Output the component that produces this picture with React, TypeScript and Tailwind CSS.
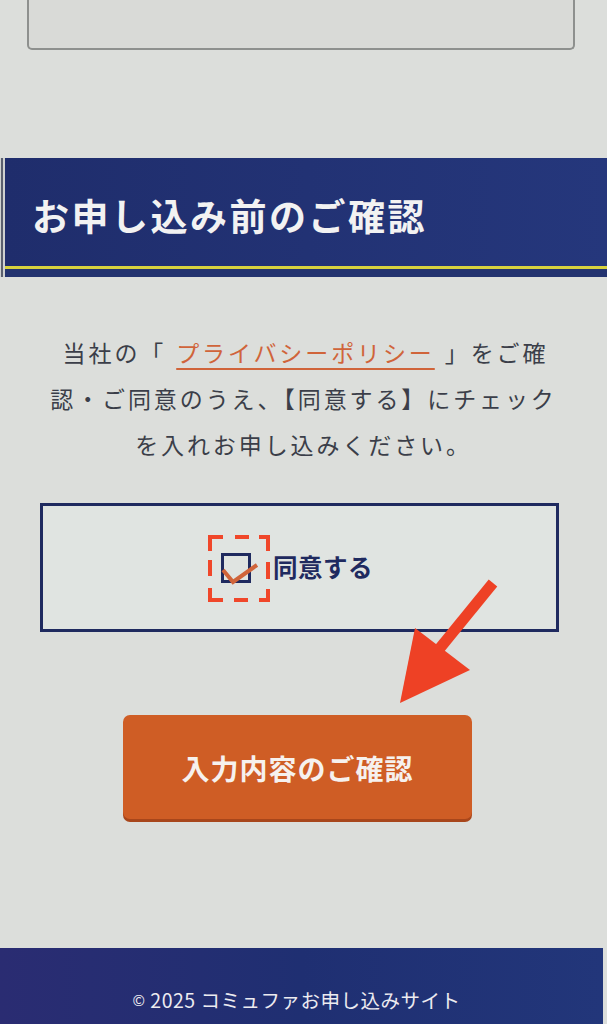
import React from "react";

export default function App() {
  return (
    <div
      className="relative min-h-[1024px] overflow-hidden bg-[#dcdedb]"
      style={{ fontFamily: '"Noto Sans CJK JP", "Noto Sans", sans-serif' }}
    >
      {/* top textarea remnant */}
      <div className="ml-[27px] mr-[32px] h-[50px] rounded-b-[5px] border-x-2 border-b-2 border-[#8e908e] bg-[#d9dad7]" />

      {/* section header */}
      <div className="mt-[108px] flex">
        <div className="flex w-[5px] bg-[#cfd1d0]">
          <div className="ml-[1px] w-[2px] bg-[#5a5f6e]" />
        </div>
        <div className="flex-1">
          <div className="flex h-[108px] items-center bg-gradient-to-r from-[#1f2d6c] to-[#25377c] pl-[27px] pt-[8px]">
            <h2 className="text-[37px] font-bold tracking-[2.5px] text-[#f2f2f2]">
              お申し込み前のご確認
            </h2>
          </div>
          <div className="h-[3px] bg-[#d8d23e]" />
          <div className="h-[8px] bg-[#23336f]" />
        </div>
      </div>

      {/* paragraph */}
      <div className="mt-[52px] flex flex-col items-center text-[23px] leading-[46px] tracking-[2.9px] text-[#3b3e49]">
        <p className="whitespace-nowrap pl-[4px]">
          当社の「
          <span className="mx-[10px] text-[#d0643a] underline decoration-[2px] underline-offset-[6px]">
            プライバシーポリシー
          </span>
          」をご確
        </p>
        <p className="whitespace-nowrap">認・ご同意のうえ、【同意する】にチェック</p>
        <p className="whitespace-nowrap">を入れお申し込みください。</p>
      </div>

      {/* agree box */}
      <div className="ml-[40px] mr-[48px] mt-[36px] flex h-[129px] items-center justify-center border-[3px] border-[#1f2a5f] bg-[#e0e4e1]">
        <div className="flex items-center pr-[5px]">
          <div className="relative h-[30px] w-[30px] border-[3px] border-[#1f2a5f]">
            <svg
              className="absolute left-[-2px] top-[-2px] overflow-visible"
              width="34"
              height="34"
              viewBox="0 0 34 34"
            >
              <polyline
                points="1,16 11,28 35,11"
                fill="none"
                stroke="#d0643a"
                strokeWidth="4"
                strokeLinejoin="miter"
              />
            </svg>
            <svg
              className="absolute left-[-16px] top-[-21px]"
              width="62"
              height="67"
              viewBox="0 0 62 67"
            >
              <g fill="none" stroke="#f0472a" strokeWidth="4">
                <polyline points="2,16 2,2 15,2" />
                <line x1="27" y1="2" x2="41" y2="2" />
                <polyline points="51,2 60,2 60,16" />
                <line x1="60" y1="27" x2="60" y2="44" />
                <polyline points="60,54 60,65 51,65" />
                <line x1="40" y1="65" x2="26" y2="65" />
                <polyline points="15,65 2,65 2,53" />
                <line x1="2" y1="41" x2="2" y2="25" />
              </g>
            </svg>
          </div>
          <span className="ml-[22px] text-[24.5px] font-bold tracking-[0.5px] text-[#1f2a5f]">
            同意する
          </span>
        </div>
      </div>

      {/* confirm button */}
      <div className="ml-[123px] mt-[83px] w-[349px]">
        <button className="flex h-[104px] w-full items-center justify-center rounded-[7px] bg-[#cf5d25] pt-[2px] text-[28px] font-bold tracking-[1px] text-[#f6f1ee] shadow-[0_3px_0_#a8461b]">
          入力内容のご確認
        </button>
      </div>

      {/* footer */}
      <footer className="mr-[4px] mt-[129px] h-[120px] bg-gradient-to-r from-[#2a2c72] via-[#1f2f72] to-[#22367a] pt-[37px] text-center">
        <p className="pr-[10px] text-[19.5px] tracking-[0.5px] text-[#ecebf0]">
          <span className="align-[2px] text-[15px]">©</span> 2025 コミュファお申し込みサイト
        </p>
      </footer>

      {/* annotation arrow */}
      <svg
        className="pointer-events-none absolute left-0 top-0"
        width="607"
        height="1024"
        viewBox="0 0 607 1024"
      >
        <line x1="493" y1="583" x2="440" y2="648" stroke="#ee4125" strokeWidth="11" />
        <polygon points="400,703 415,628 470,670" fill="#ee4125" />
      </svg>
    </div>
  );
}
